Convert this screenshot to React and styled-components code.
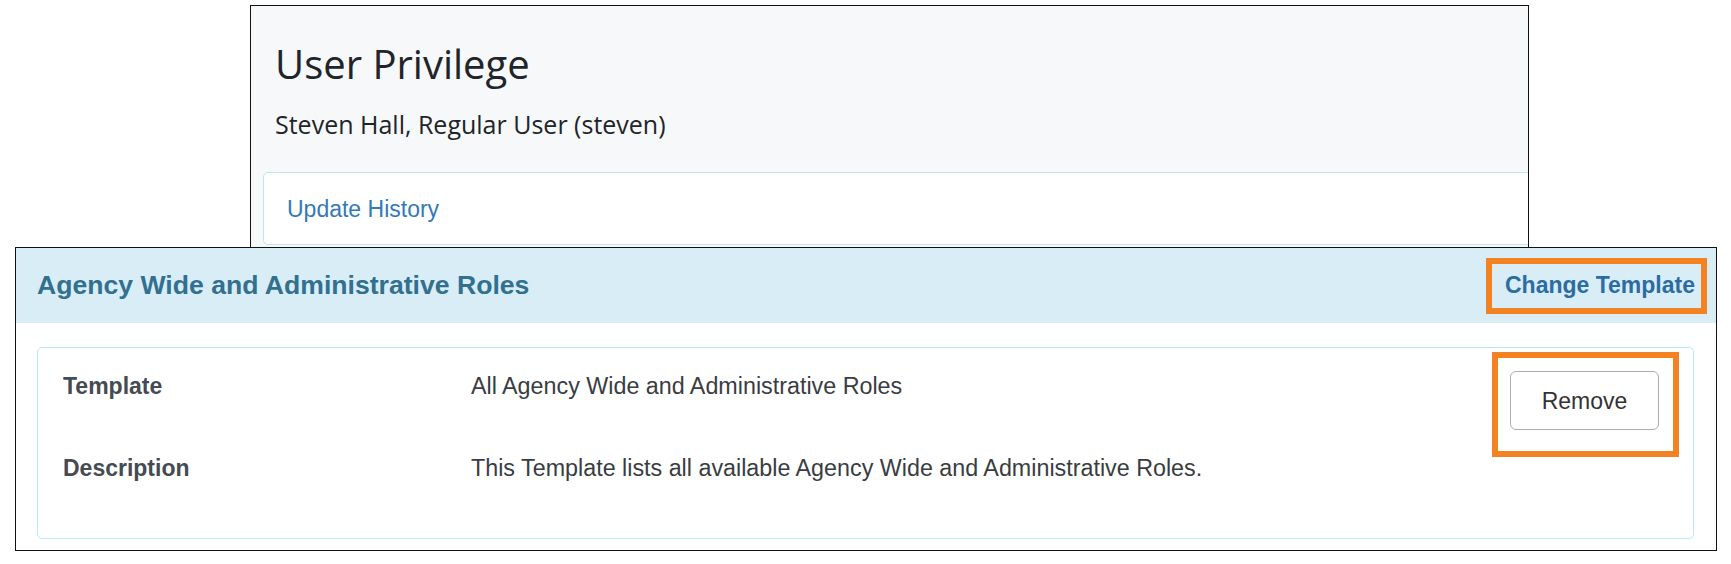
import React from 'react'
import styled, { createGlobalStyle } from 'styled-components'

const GlobalStyle = createGlobalStyle`
  html, body {
    margin: 0;
    padding: 0;
    background: #ffffff;
  }
  body {
    font-family: 'Liberation Sans', Arial, sans-serif;
    -webkit-font-smoothing: antialiased;
  }
`

const Page = styled.div`
  width: 1731px;
  height: 564px;
  padding-top: 5px;
  box-sizing: border-box;
  overflow: hidden;
`

const PrivilegeBox = styled.section`
  margin-left: 250px;
  width: 1279px;
  box-sizing: border-box;
  border: 1px solid #111;
  border-bottom: none;
  background: #f7f8fa;
  padding: 0 0 2px 12px;
  overflow: hidden;
`

const Intro = styled.div`
  padding: 34px 0 0 12px;
  font-family: 'Open Sans', 'Noto Sans', sans-serif;
  color: #212529;
`

const Title = styled.h1`
  margin: 0;
  font-size: 40px;
  font-weight: 400;
  line-height: 48px;
`

const Subtitle = styled.p`
  margin: 18px 0 0;
  font-size: 25px;
  line-height: 37px;
`

const HistoryCard = styled.div`
  margin-top: 29px;
  width: calc(100% + 40px);
  height: 73px;
  box-sizing: border-box;
  display: flex;
  align-items: center;
  padding: 1px 0 0 23px;
  background: #ffffff;
  border: 1px solid #bee5eb;
  border-radius: 5px;
`

const Link = styled.a`
  font-size: 23px;
  color: #337ab7;
  text-decoration: none;
`

const Panel = styled.section`
  margin-left: 15px;
  width: 1702px;
  box-sizing: border-box;
  border: 1px solid #111;
  background: #ffffff;
`

const PanelHeading = styled.header`
  height: 75px;
  display: flex;
  align-items: center;
  justify-content: space-between;
  padding: 0 9px 0 21px;
  background: #d9edf7;
`

const PanelTitle = styled.h2`
  margin: 0;
  font-size: 26.6px;
  font-weight: 700;
  color: #31708f;
`

const Highlight = styled.div`
  border: 6px solid #f28222;
  box-sizing: border-box;
  display: flex;
  align-items: center;
  padding: ${p => p.$pad};
  height: ${p => p.$height || 'auto'};
  align-self: ${p => p.$align || 'center'};
`

const HeadingLink = styled.a`
  font-size: 23px;
  font-weight: 700;
  color: #2b6ca3;
  text-decoration: none;
`

const PanelBody = styled.div`
  padding: 24px 22px 11px 21px;
`

const DetailCard = styled.div`
  height: 192px;
  box-sizing: border-box;
  display: flex;
  padding: 4px 14px 0 25px;
  border: 1px solid #bce8f1;
  border-radius: 5px;
`

const DetailGrid = styled.dl`
  flex: 1;
  margin: 0;
  padding-top: 18px;
  display: grid;
  grid-template-columns: 408px 1fr;
  row-gap: 49px;
  align-content: start;
  font-size: 23px;
  line-height: 33px;
`

const Label = styled.dt`
  font-weight: 700;
  color: #454b52;
`

const Value = styled.dd`
  margin: 0;
  font-size: 23.3px;
  color: #393d42;
`

const RemoveButton = styled.button`
  width: 149px;
  height: 59px;
  box-sizing: border-box;
  padding-top: 2px;
  border: 1px solid #adadad;
  border-radius: 6px;
  background: #ffffff;
  font-family: 'Liberation Sans', Arial, sans-serif;
  font-size: 23px;
  color: #333;
  cursor: pointer;
`

const details = [
  { label: 'Template', value: 'All Agency Wide and Administrative Roles' },
  { label: 'Description', value: 'This Template lists all available Agency Wide and Administrative Roles.' }
]

export default function App() {
  return (
    <Page>
      <GlobalStyle />
      <PrivilegeBox>
        <Intro>
          <Title>User Privilege</Title>
          <Subtitle>Steven Hall, Regular User (steven)</Subtitle>
        </Intro>
        <HistoryCard>
          <Link href="#history">Update History</Link>
        </HistoryCard>
      </PrivilegeBox>
      <Panel>
        <PanelHeading>
          <PanelTitle>Agency Wide and Administrative Roles</PanelTitle>
          <Highlight $pad="0 6px 0 13px" $height="56px">
            <HeadingLink href="#change">Change Template</HeadingLink>
          </Highlight>
        </PanelHeading>
        <PanelBody>
          <DetailCard>
            <DetailGrid>
              {details.map(d => (
                <React.Fragment key={d.label}>
                  <Label>{d.label}</Label>
                  <Value>{d.value}</Value>
                </React.Fragment>
              ))}
            </DetailGrid>
            <Highlight $pad="13px 14px 21px 12px" $align="flex-start">
              <RemoveButton type="button">Remove</RemoveButton>
            </Highlight>
          </DetailCard>
        </PanelBody>
      </Panel>
    </Page>
  )
}
